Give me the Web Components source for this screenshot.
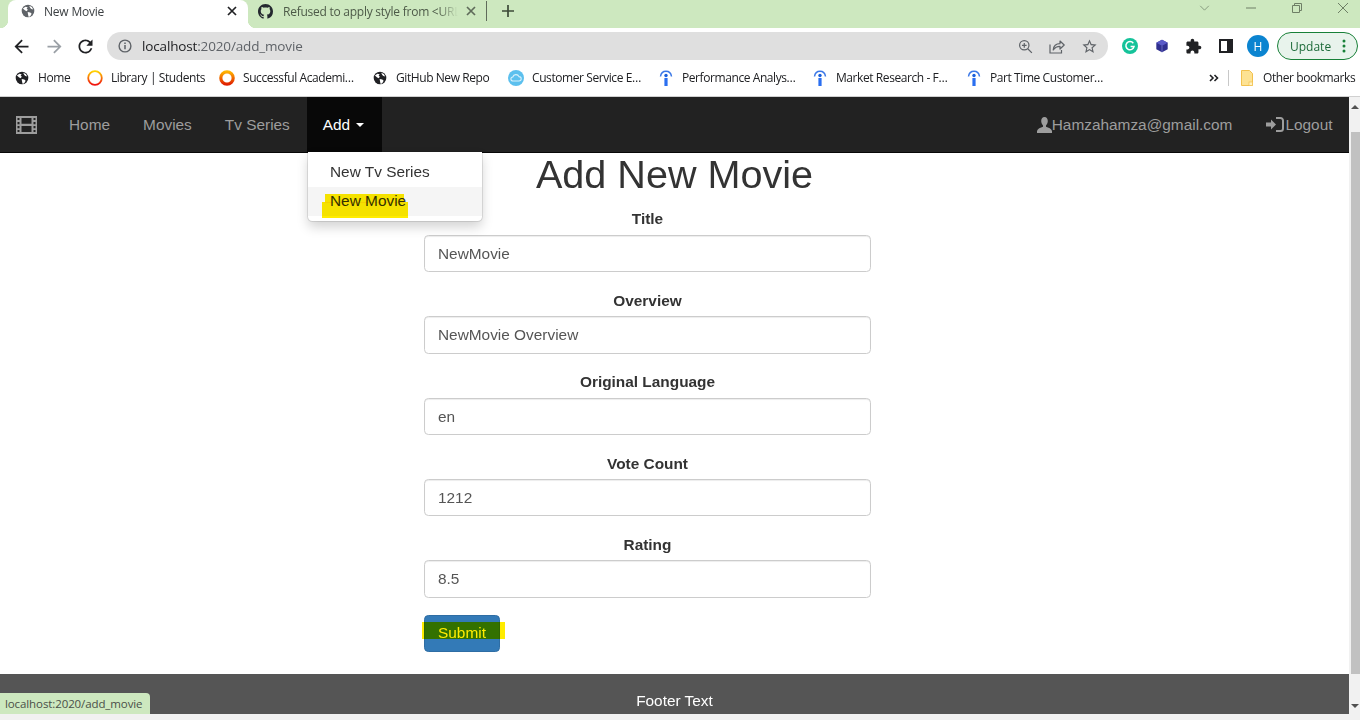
<!DOCTYPE html>
<html lang="en">
<head>
<meta charset="utf-8">
<title>New Movie</title>
<style>
  html, body { margin: 0; height: 100%; overflow: hidden; background: #fff; }
  body { display: flex; flex-direction: column; height: 720px; font-family: "Liberation Sans", Arial, sans-serif; }
</style>
</head>
<body>
<x-tabstrip></x-tabstrip>
<x-toolbar></x-toolbar>
<x-bookmarks>
  <x-bookmark icon="globe" w="73">Home</x-bookmark>
  <x-bookmark icon="ring-thin" w="132" size="16">Library | Students</x-bookmark>
  <x-bookmark icon="ring" w="153" size="16">Successful Academi…</x-bookmark>
  <x-bookmark icon="globe" w="136">GitHub New Repo</x-bookmark>
  <x-bookmark icon="cloud" w="150" size="16">Customer Service E…</x-bookmark>
  <x-bookmark icon="bar" w="154" size="16">Performance Analys…</x-bookmark>
  <x-bookmark icon="bar" w="154" size="16">Market Research - F…</x-bookmark>
  <x-bookmark icon="bar" w="150" size="16">Part Time Customer…</x-bookmark>
</x-bookmarks>
<x-viewport>
  <x-navbar></x-navbar>
  <x-movie-form heading="Add New Movie">
    <x-field label="Title">NewMovie</x-field>
    <x-field label="Overview">NewMovie Overview</x-field>
    <x-field label="Original Language">en</x-field>
    <x-field label="Vote Count">1212</x-field>
    <x-field label="Rating">8.5</x-field>
  </x-movie-form>
  <x-footer>Footer Text</x-footer>
</x-viewport>

<script>
  const ICONS = {
    globe: `<svg viewBox="0 0 16 16"><circle cx="8" cy="8" r="7.2" fill="var(--c,#202124)"/><path fill="#fff" d="M2.2 5.2 5 3l2.6.6L6.5 5.4 7.9 6.6 6.3 8.4 4.4 7.2zM9.4 2l3 1.4 1.6 3-2.2-.6-1.4-1.6zM7.6 9.2l3 .4 1.6 1.6-1.8 3-1.8.4-.6-3z"/></svg>`,
    github: `<svg viewBox="0 0 16 16"><path fill="#24292f" d="M8 0C3.58 0 0 3.58 0 8c0 3.54 2.29 6.53 5.47 7.59.4.07.55-.17.55-.38 0-.19-.01-.82-.01-1.49-2.01.37-2.53-.49-2.69-.94-.09-.23-.48-.94-.82-1.13-.28-.15-.68-.52-.01-.53.63-.01 1.08.58 1.23.82.72 1.21 1.87.87 2.33.66.07-.52.28-.87.51-1.07-1.78-.2-3.64-.89-3.64-3.95 0-.87.31-1.59.82-2.15-.08-.2-.36-1.02.08-2.12 0 0 .67-.21 2.2.82.64-.18 1.32-.27 2-.27.68 0 1.36.09 2 .27 1.53-1.04 2.2-.82 2.2-.82.44 1.1.16 1.92.08 2.12.51.56.82 1.27.82 2.15 0 3.07-1.87 3.75-3.65 3.95.29.25.54.73.54 1.48 0 1.07-.01 1.93-.01 2.2 0 .21.15.46.55.38A8.013 8.013 0 0016 8c0-4.42-3.58-8-8-8z"/></svg>`,
    close: `<svg viewBox="0 0 10 10"><path d="M1 1l8 8M9 1l-8 8" stroke="var(--c,#202124)" stroke-width="1.7" fill="none"/></svg>`,
    plus: `<svg viewBox="0 0 12 12"><path d="M6 0v12M0 6h12" stroke="#3c4a38" stroke-width="1.7" fill="none"/></svg>`,
    back: `<svg viewBox="0 0 24 24"><path fill="#202124" d="M20 11H7.83l5.59-5.59L12 4l-8 8 8 8 1.41-1.41L7.83 13H20v-2z"/></svg>`,
    forward: `<svg viewBox="0 0 24 24"><path fill="#9aa0a6" d="M4 11h12.17l-5.59-5.59L12 4l8 8-8 8-1.41-1.41L16.17 13H4v-2z"/></svg>`,
    reload: `<svg viewBox="0 0 24 24"><path fill="#202124" d="M17.65 6.35A7.958 7.958 0 0012 4c-4.42 0-7.99 3.58-7.99 8s3.57 8 7.99 8c3.73 0 6.84-2.55 7.73-6h-2.08A5.99 5.99 0 0112 18c-3.31 0-6-2.69-6-6s2.69-6 6-6c1.66 0 3.14.69 4.22 1.78L13 11h7V4l-2.35 2.35z"/></svg>`,
    info: `<svg viewBox="0 0 14 14"><circle cx="7" cy="7" r="5.9" fill="none" stroke="#5f6368" stroke-width="1.4"/><path d="M7 6v4.2M7 3.6v1.4" stroke="#5f6368" stroke-width="1.5"/></svg>`,
    zoom: `<svg viewBox="0 0 16 16"><circle cx="6.7" cy="6.7" r="5" fill="none" stroke="#5f6368" stroke-width="1.3"/><path d="M10.4 10.4l4.4 4.4M6.7 4.2v5M4.2 6.7h5" stroke="#5f6368" stroke-width="1.3" fill="none"/></svg>`,
    share: `<svg viewBox="0 0 16 16"><path d="M1 6.5V15h11.5v-3" fill="none" stroke="#5f6368" stroke-width="1.2"/><path d="M4.2 12c.4-4 3-6.3 6.8-6.3V3l4.2 4-4.2 4V8.3C8 8.3 5.8 9.5 4.2 12z" fill="none" stroke="#5f6368" stroke-width="1.2" stroke-linejoin="round"/></svg>`,
    star: `<svg viewBox="0 0 24 24"><path fill="#5f6368" d="M22 9.24l-7.19-.62L12 2 9.19 8.63 2 9.24l5.46 4.73L5.82 21 12 17.27 18.18 21l-1.63-7.03L22 9.24zM12 15.4l-3.76 2.27 1-4.28-3.32-2.88 4.38-.38L12 6.1l1.71 4.04 4.38.38-3.32 2.88 1 4.28L12 15.4z"/></svg>`,
    grammarly: `<svg viewBox="0 0 16 16"><circle cx="8" cy="8" r="8" fill="#15c39a"/><path d="M11.3 5.2A4.1 4.1 0 1 0 12 8.6H8.6" fill="none" stroke="#fff" stroke-width="1.5"/></svg>`,
    cube: `<svg viewBox="0 0 16 16"><path fill="#2f2f8f" d="M8 .8l6.5 3.4v7.6L8 15.2 1.5 11.8V4.2z"/><path fill="#5a5ac8" d="M8 .8l6.5 3.4L8 7.6 1.5 4.2z"/><path d="M8 7.6v7.6" stroke="#8d8de0" stroke-width=".7"/></svg>`,
    puzzle: `<svg viewBox="0 0 24 24"><path fill="#202124" d="M20.5 11H19V7c0-1.1-.9-2-2-2h-4V3.5C13 2.12 11.88 1 10.5 1S8 2.12 8 3.5V5H4c-1.1 0-1.99.9-1.99 2v3.8H3.5c1.49 0 2.7 1.21 2.7 2.7s-1.21 2.7-2.7 2.7H2V20c0 1.1.9 2 2 2h3.8v-1.5c0-1.49 1.21-2.7 2.7-2.7 1.49 0 2.7 1.21 2.7 2.7V22H17c1.1 0 2-.9 2-2v-4h1.5c1.38 0 2.5-1.12 2.5-2.5S21.88 11 20.5 11z"/></svg>`,
    panel: `<svg viewBox="0 0 14 14"><path fill-rule="evenodd" fill="#202124" d="M0 0h14v14H0zM2 2v10h6V2z"/></svg>`,
    'ring-thin': `<svg viewBox="0 0 16 16"><defs><linearGradient id="a" x1="0" y1="0" x2="0" y2="1"><stop offset="0" stop-color="#ffd400"/><stop offset="1" stop-color="#f01010"/></linearGradient></defs><circle cx="8" cy="8" r="6.8" fill="none" stroke="url(#a)" stroke-width="1.8"/></svg>`,
    ring: `<svg viewBox="0 0 16 16"><defs><linearGradient id="b" x1="0" y1="0" x2="0" y2="1"><stop offset="0" stop-color="#ffb300"/><stop offset="1" stop-color="#e02000"/></linearGradient></defs><circle cx="8" cy="8" r="6.2" fill="none" stroke="url(#b)" stroke-width="3.2"/></svg>`,
    cloud: `<svg viewBox="0 0 16 16"><circle cx="8" cy="8" r="8" fill="#5cc0ee"/><path d="M5 11a2 2 0 0 1-.2-4A3.3 3.3 0 0 1 11 6.6 2.2 2.2 0 0 1 11 11z" fill="none" stroke="#d8f1fc" stroke-width="1.1"/></svg>`,
    bar: `<svg viewBox="0 0 16 16"><path d="M2.5 6.5C3 3 5 1.3 8 1.3s5 1.7 5.5 5.2" fill="none" stroke="#3b78e7" stroke-width="1.5"/><circle cx="8" cy="5.5" r="1.7" fill="#1a5fdc"/><rect x="6.4" y="8" width="3.2" height="8" fill="#2b6ff0"/></svg>`,
    folder: `<svg viewBox="0 0 12 16"><path fill="#fde293" stroke="#f2c14e" d="M.5.5h8l3 3v12H.5z"/><rect x="8" y="12" width="3.5" height="3.5" fill="#fff3c4" stroke="#f2c14e" stroke-width=".7"/></svg>`,
    chevron: `<svg viewBox="0 0 12 7"><path d="M1 1l5 5 5-5" fill="none" stroke="#7d8f76" stroke-width="1"/></svg>`,
    minimize: `<svg viewBox="0 0 10 2"><path d="M0 1h10" stroke="#6e7f66" stroke-width="1"/></svg>`,
    restore: `<svg viewBox="0 0 10 10"><path d="M.5 2.5h7v7h-7zM2.5 2.5v-2h7v7h-2" fill="none" stroke="#6e7f66" stroke-width="1"/></svg>`,
    winclose: `<svg viewBox="0 0 10 10"><path d="M0 0l10 10M10 0L0 10" stroke="#6e7f66" stroke-width="1" fill="none"/></svg>`,
    dots: `<svg viewBox="0 0 4 14"><circle cx="2" cy="2" r="1.5" fill="#188038"/><circle cx="2" cy="7" r="1.5" fill="#188038"/><circle cx="2" cy="12" r="1.5" fill="#188038"/></svg>`,
    more: `<svg viewBox="0 0 10 8"><path d="M1 1l3 3-3 3M5.5 1l3 3-3 3" fill="none" stroke="#202124" stroke-width="1.6"/></svg>`,
    film: `<svg viewBox="0 0 21 18"><path fill="#9d9d9d" fill-rule="evenodd" d="M0 0h21v18H0zM1.5 2v2h2V2zM1.5 6v2.200h2V6zM1.5 10v2.200h2V10zM1.5 14v2h2v-2zM17.500 2v2h2V2zM17.500 6v2.200h2V6zM17.500 10v2.200h2V10zM17.500 14v2h2v-2zM5.500 2v5.800h10V2zM5.500 10v6h10v-6z"/></svg>`,
    user: `<svg viewBox="0 0 15 16"><path fill="#9d9d9d" d="M7.5 0C5.3 0 4.2 1.7 4.200 4c0 1.800.8 3.500 1.800 4.400v1.400C3.500 10.500.5 11.800 0 14v2h15v-2c-.5-2.200-3.500-3.500-6-4.200V8.400c1-.9 1.800-2.600 1.800-4.400C10.800 1.700 9.700 0 7.500 0z"/></svg>`,
    login: `<svg viewBox="0 0 18 15"><path fill="#9d9d9d" d="M0 5.500h5V2.500l5 5-5 5v-3H0z"/><path fill="none" stroke="#9d9d9d" stroke-width="2" d="M10 1h4.500A2.500 2.500 0 0 1 17 3.500v8a2.500 2.500 0 0 1-2.500 2.500H10"/></svg>`
  };

  // base class, the shadow root is set from a render() string
  class Shadowed extends HTMLElement {
    constructor() {
      super();
      this.attachShadow({mode: 'open'});
    }
    connectedCallback() {
      this.shadowRoot.innerHTML = this.render();
    }
  }

  class XIcon extends Shadowed {
    render() {
      const size = this.getAttribute('size') || 16;
      const height = this.getAttribute('h') || size;
      return `
        <style>
          :host { display: inline-flex; flex: none; width: ${size}px; height: ${height}px; }
          svg { width: 100%; height: 100%; display: block; }
        </style>
        ${ICONS[this.getAttribute('name')]}
      `;
    }
  }

  class XTabstrip extends Shadowed {
    render() {
      return `
        <style>
          :host {
            display: flex; height: 28px; background: #cde8bf; flex: none; align-items: stretch;
            font: 12px "Open Sans", sans-serif; letter-spacing: -.2px;
          }
          .active {
            position: relative; width: 240px; margin-left: 8px; background: #fff;
            border-radius: 8px 8px 0 0; display: flex; align-items: center; padding: 0 11px 6px 13px; box-sizing: border-box;
            color: #3c4043;
          }
          .active::before, .active::after {
            content: ''; position: absolute; bottom: 0; width: 8px; height: 8px;
          }
          .active::before { left: -8px; background: radial-gradient(circle at 0 0, transparent 8px, #fff 8.5px); }
          .active::after { right: -8px; background: radial-gradient(circle at 100% 0, transparent 8px, #fff 8.5px); }
          .title { margin-left: 9px; flex: 1; }
          .inactive { display: flex; align-items: center; padding: 0 0 6px 10px; color: #4d5a48; }
          .clip {
            margin-left: 10px; width: 175px; white-space: nowrap; letter-spacing: -.25px;
            -webkit-mask-image: linear-gradient(90deg, #000 155px, transparent 175px);
          }
          .inactive x-icon.x { margin-left: 8px; --c: #5f6b5a; }
          .sep { width: 1px; height: 20px; background: #5f6b5a; margin-left: 10px; }
          .plus { margin-left: 15px; }
          .win { margin-left: auto; display: flex; align-items: center; height: 16px; }
          .win-wrap { flex: 1; display: flex; }
        </style>
        <div class="active">
          <x-icon name="globe" size="14" style="--c:#5f6368"></x-icon>
          <span class="title">New Movie</span>
          <x-icon name="close" size="10"></x-icon>
        </div>
        <div class="inactive">
          <x-icon name="github" size="15"></x-icon>
          <span class="clip">Refused to apply style from &lt;URL</span>
          <x-icon class="x" name="close" size="10"></x-icon>
          <span class="sep"></span>
          <x-icon class="plus" name="plus" size="12"></x-icon>
        </div>
        <div class="win-wrap">
          <div class="win">
            <x-icon name="chevron" size="11" h="6" style="margin-right:36px"></x-icon>
            <x-icon name="minimize" size="10" h="2" style="margin-right:36px"></x-icon>
            <x-icon name="restore" size="10" style="margin-right:36px"></x-icon>
            <x-icon name="winclose" size="10" style="margin-right:12px"></x-icon>
          </div>
        </div>
      `;
    }
  }

  class XToolbar extends Shadowed {
    render() {
      return `
        <style>
          :host { display: flex; align-items: center; height: 35px; flex: none; background: #fff; padding: 1px 0 0 11px; box-sizing: border-box; }
          .nav { display: flex; align-items: center; gap: 12px; }
          .omni {
            width: 1001px; height: 28px; margin-left: 11px; border-radius: 14px; background: #dfdfdf;
            display: flex; align-items: center; padding: 0 10px 0 11px; box-sizing: border-box;
          }
          .url { margin-left: 10px; font: 13.5px "Open Sans", sans-serif; letter-spacing: -.15px; color: #5f6368; flex: 1; }
          .url b { font-weight: 400; color: #202124; }
          .omni-icons { display: flex; align-items: center; gap: 16px; }
          .ext { display: flex; align-items: center; }
          .avatar {
            width: 22px; height: 22px; border-radius: 50%; background: #0b84d0; color: #fff;
            font: 12px "Open Sans", sans-serif; display: flex; align-items: center; justify-content: center;
            margin-left: 14px;
          }
          .update {
            margin-left: 8px; width: 81px; height: 28px; box-sizing: border-box; border: 1px solid #188038; border-radius: 14px;
            background: #e8f3ec; display: flex; align-items: center; justify-content: space-between;
            padding: 0 11px 0 12px; color: #1d6b3a; font: 12px "Open Sans", sans-serif;
          }
        </style>
        <div class="nav">
          <x-icon name="back" size="21"></x-icon>
          <x-icon name="forward" size="21"></x-icon>
          <x-icon name="reload" size="21" style="margin-left:-2px"></x-icon>
        </div>
        <div class="omni">
          <x-icon name="info" size="14"></x-icon>
          <span class="url"><b>localhost</b>:2020/add_movie</span>
          <div class="omni-icons">
            <x-icon name="zoom" size="15"></x-icon>
            <x-icon name="share" size="16"></x-icon>
            <x-icon name="star" size="17"></x-icon>
          </div>
        </div>
        <div class="ext">
          <x-icon name="grammarly" size="16" style="margin-left:14px"></x-icon>
          <x-icon name="cube" size="14" style="margin-left:17px"></x-icon>
          <x-icon name="puzzle" size="17" style="margin-left:16px"></x-icon>
          <x-icon name="panel" size="14" style="margin-left:17px"></x-icon>
          <span class="avatar">H</span>
          <span class="update">Update<x-icon name="dots" size="4" h="14"></x-icon></span>
        </div>
      `;
    }
  }

  class XBookmarks extends Shadowed {
    render() {
      return `
        <style>
          :host {
            display: flex; align-items: center; height: 29px; flex: none; background: #fff; padding: 0 0 4px 15px;
            font: 12px "Open Sans", sans-serif; letter-spacing: -.42px; color: #202124;
          }
          .more { margin-left: 92px; }
          .sep { width: 1px; height: 16px; background: #c8c8c8; margin-left: 9px; }
          .other { margin-left: 12px; display: flex; align-items: center; gap: 10px; white-space: nowrap; }
        </style>
        <slot></slot>
        <x-icon class="more" name="more" size="10" h="8"></x-icon>
        <span class="sep"></span>
        <span class="other"><x-icon name="folder" size="12" h="16"></x-icon>Other bookmarks</span>
      `;
    }
  }

  class XBookmark extends Shadowed {
    render() {
      const size = +(this.getAttribute('size') || 14);
      return `
        <style>
          :host { display: flex; align-items: center; white-space: nowrap; width: ${this.getAttribute('w')}px; flex: none; }
          x-icon { margin-left: ${(14 - size) / 2}px; margin-right: ${9 + (14 - size) / 2}px; }
        </style>
        <x-icon name="${this.getAttribute('icon')}" size="${size}"></x-icon>
        <span><slot></slot></span>
      `;
    }
  }

  // page below the browser chrome, with the scrollbar at its right
  class XViewport extends Shadowed {
    render() {
      return `
        <style>
          :host { display: flex; flex: none; height: 624px; border-top: 1px solid #d0d0d0; box-sizing: border-box; position: relative; background: #f1f1f1; }
          .page { flex: 1; height: 617px; background: #fff; display: flex; flex-direction: column; position: relative; min-width: 0; }
          .page ::slotted(x-footer) { margin-top: auto; }
          .bar { width: 11px; height: 617px; background: #f1f1f1; position: relative; display: flex; flex-direction: column; align-items: flex-end; }
          .thumb { width: 9px; height: 542px; margin-top: 35px; background: #c1c1c1; }
          .up, .down { position: absolute; right: 1px; width: 0; height: 0; border-left: 4px solid transparent; border-right: 4px solid transparent; }
          .up { top: 8px; border-bottom: 4px solid #505050; }
          .down { bottom: 6px; border-top: 4px solid #505050; }
          .status {
            position: absolute; left: 0; bottom: 0; height: 21px; width: 150px; box-sizing: border-box;
            background: #cde8bf; border-top-right-radius: 4px; padding-left: 5px;
            font: 11.5px/21px "Open Sans", sans-serif; letter-spacing: -.1px; color: #4a4f48; white-space: nowrap;
          }
        </style>
        <div class="page">
          <slot></slot>
          <div class="status">localhost:2020/add_movie</div>
        </div>
        <div class="bar"><i class="up"></i><div class="thumb"></div><i class="down"></i></div>
      `;
    }
  }

  class XNavbar extends Shadowed {
    render() {
      return `
        <style>
          :host {
            display: flex; flex: none; height: 56px; box-sizing: border-box; background: #222; border-bottom: 1px solid #080808;
            font-size: 15.4px; color: #9d9d9d; position: relative; z-index: 2;
          }
          a { display: flex; align-items: center; padding: 0 16.5px; height: 55px; }
          .brand { padding-right: 15.5px; padding-left: 16px; }
          .open { background: #080808; color: #fff; margin-left: .6px; padding: 0 17.5px 0 15.9px; }
          .caret { display: inline-block; margin-left: 6px; border-top: 4.4px solid #fff; border-left: 4.4px solid transparent; border-right: 4.4px solid transparent; }
          .right { margin-left: auto; display: flex; }
          .right a.user { padding-right: 17.5px; }
          .menu {
            position: absolute; left: 308px; top: 55px; width: 174px; box-sizing: border-box; height: 69px; padding: 6px 0 0;
            background: #fff; border-radius: 0 0 4.4px 4.4px; box-shadow: 0 6px 12px rgba(0,0,0,.175), 0 0 0 1px rgba(0,0,0,.1);
            color: #333;
          }
          .item { display: block; height: 28.8px; line-height: 28px; padding-left: 22px; position: relative; }
          .item.hover { background: #f5f5f5; }
          .mark { position: absolute; background: #ffec00; mix-blend-mode: multiply; }
        </style>
        <a class="brand"><x-icon name="film" size="21" h="18"></x-icon></a>
        <a>Home</a>
        <a>Movies</a>
        <a>Tv Series</a>
        <a class="open">Add<span class="caret"></span></a>
        <div class="right">
          <a class="user"><x-icon name="user" size="15" h="16"></x-icon>Hamzahamza@gmail.com</a>
          <a><x-icon name="login" size="18" h="15" style="margin-right:1px"></x-icon>Logout</a>
        </div>
        <div class="menu">
          <span class="item">New Tv Series</span>
          <span class="item hover">New Movie
            <i class="mark" style="left:17px;top:7px;width:79px;height:9px"></i>
            <i class="mark" style="left:14px;top:15px;width:86px;height:16px"></i>
          </span>
        </div>
      `;
    }
  }

  class XMovieForm extends Shadowed {
    render() {
      return `
        <style>
          :host { display: block; position: relative; color: #333; }
          h1 { margin: 0; height: 54.4px; text-align: center; font-weight: 400; font-size: 39.6px; line-height: 43.56px; }
          form { width: 447px; margin-left: 424px; display: flex; flex-direction: column; }
          .submit {
            position: relative; width: 76px; height: 37px; margin-top: .4px; box-sizing: border-box; border: 1px solid #2e6da4; border-radius: 4.4px;
            background: #337ab7; color: #fff; display: flex; align-items: center; justify-content: center; font-size: 15.4px;
          }
          .mark { position: absolute; left: -3px; right: -6px; top: 6px; height: 17px; background: #ffec00; mix-blend-mode: multiply; }
        </style>
        <h1>${this.getAttribute('heading')}</h1>
        <form onsubmit="return false">
          <slot></slot>
          <div class="submit">Submit<i class="mark"></i></div>
        </form>
      `;
    }
  }

  class XField extends Shadowed {
    render() {
      return `
        <style>
          :host { display: block; margin-bottom: 16.5px; font-size: 15.4px; color: #333; }
          label { display: block; text-align: center; font-weight: 700; padding-top: 1px; line-height: 21px; margin-bottom: 5.5px; }
          .input {
            height: 37.4px; box-sizing: border-box; border: 1px solid #ccc; border-radius: 4.4px; padding: 0 13px;
            color: #555; line-height: 35.4px; background: #fff; box-shadow: inset 0 1px 1px rgba(0,0,0,.075);
          }
        </style>
        <label>${this.getAttribute('label')}</label>
        <div class="input"><slot></slot></div>
      `;
    }
  }

  class XFooter extends Shadowed {
    render() {
      return `
        <style>
          :host {
            display: flex; flex: none; height: 40px; background: #555; color: #fff; font-size: 15.4px;
            justify-content: center; padding-top: 18px; box-sizing: border-box; line-height: 18px;
          }
        </style>
        <slot></slot>
      `;
    }
  }

  customElements.define('x-icon', XIcon);
  customElements.define('x-tabstrip', XTabstrip);
  customElements.define('x-toolbar', XToolbar);
  customElements.define('x-bookmarks', XBookmarks);
  customElements.define('x-bookmark', XBookmark);
  customElements.define('x-viewport', XViewport);
  customElements.define('x-navbar', XNavbar);
  customElements.define('x-movie-form', XMovieForm);
  customElements.define('x-field', XField);
  customElements.define('x-footer', XFooter);
</script>
</body>
</html>
